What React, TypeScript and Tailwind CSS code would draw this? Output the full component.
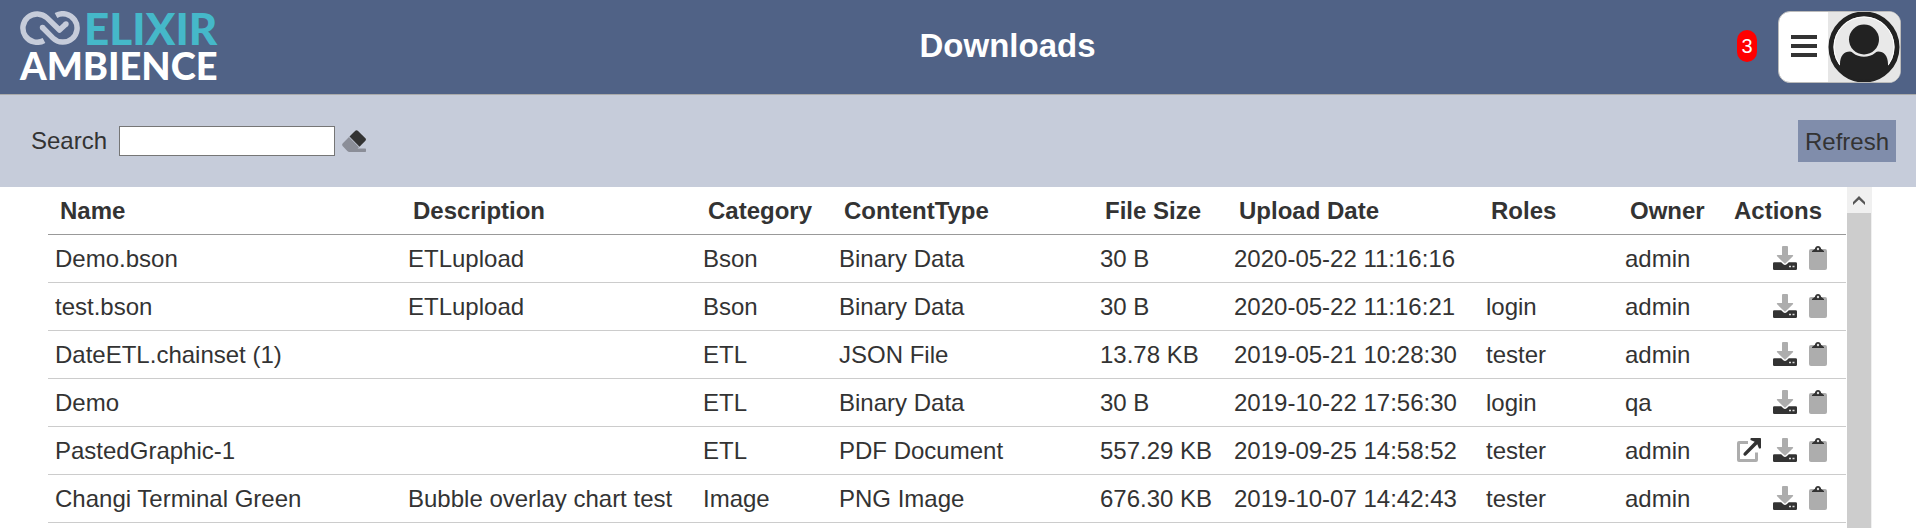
import { useState } from 'react';

type Download = {
  name: string;
  description?: string;
  category: string;
  contentType: string;
  size: string;
  uploaded: string;
  roles?: string;
  owner: string;
  canOpen?: boolean;
};

const downloads: Download[] = [
  { name: 'Demo.bson', description: 'ETLupload', category: 'Bson', contentType: 'Binary Data', size: '30 B', uploaded: '2020-05-22 11:16:16', owner: 'admin' },
  { name: 'test.bson', description: 'ETLupload', category: 'Bson', contentType: 'Binary Data', size: '30 B', uploaded: '2020-05-22 11:16:21', roles: 'login', owner: 'admin' },
  { name: 'DateETL.chainset (1)', category: 'ETL', contentType: 'JSON File', size: '13.78 KB', uploaded: '2019-05-21 10:28:30', roles: 'tester', owner: 'admin' },
  { name: 'Demo', category: 'ETL', contentType: 'Binary Data', size: '30 B', uploaded: '2019-10-22 17:56:30', roles: 'login', owner: 'qa' },
  { name: 'PastedGraphic-1', category: 'ETL', contentType: 'PDF Document', size: '557.29 KB', uploaded: '2019-09-25 14:58:52', roles: 'tester', owner: 'admin', canOpen: true },
  { name: 'Changi Terminal Green', description: 'Bubble overlay chart test', category: 'Image', contentType: 'PNG Image', size: '676.30 KB', uploaded: '2019-10-07 14:42:43', roles: 'tester', owner: 'admin' },
];

const columns = [
  { label: 'Name', width: '' },
  { label: 'Description', width: 'w-[295px]' },
  { label: 'Category', width: 'w-[136px]' },
  { label: 'ContentType', width: 'w-[261px]' },
  { label: 'File Size', width: 'w-[134px]' },
  { label: 'Upload Date', width: 'w-[252px]' },
  { label: 'Roles', width: 'w-[139px]' },
  { label: 'Owner', width: 'w-[105px]' },
];

const cell = 'h-12 p-0 pl-[7px] border-b border-[#ccc]';

function Logo() {
  return (
    <a href="#" aria-label="Elixir Ambience" className="flex flex-col pb-0.5 font-[Lato,sans-serif] font-black">
      <span className="flex items-center gap-1 h-[34px]">
        <svg viewBox="0 0 60 34" className="w-[60px] h-[34px]" fill="none" stroke="#c6ccda" strokeWidth="5.500" strokeLinejoin="round">
          <path d="M24 29.5A14.2 14.2 0 1 1 27 6.900L39.500 19L46 13" />
          <path d="M36 4.500A14.2 14.2 0 1 1 33 27.100L22.500 16.500" />
          <circle cx="46" cy="13" r="2.700" fill="#c6ccda" stroke="none" />
          <circle cx="22.500" cy="16.500" r="2.700" fill="#c6ccda" stroke="none" />
        </svg>
        <span className="text-[44px] leading-[34px] text-[#45b8c9]">ELIXIR</span>
      </span>
      <span className="mt-1 text-[38px] leading-8 text-white">AMBIENCE</span>
    </a>
  );
}

function Avatar() {
  return (
    <svg viewBox="0 0 72 70" className="w-[72px] h-[70px] bg-[#e6e6e6]">
      <circle cx="36" cy="35" r="33" fill="#e9e9e9" stroke="#222" strokeWidth="5" />
      <circle cx="36" cy="35" r="30" fill="none" stroke="#fff" strokeWidth="1" />
      <path d="M12 58V52C12 44 16 39.500 22 39.500Q24 39.500 25 41C31 46 41 46 47 41Q48 39.500 50 39.500C56 39.500 60 44 60 52V58C55 65 46 68 36 68S17 65 12 58Z" fill="#222" />
      <circle cx="36" cy="27.500" r="15" fill="#222" />
    </svg>
  );
}

function EraserIcon() {
  return (
    <svg viewBox="0 0 24 22" className="w-6 h-[22px]">
      <path d="M7 7L17 17.3L15.5 18.5H23.3Q24 18.5 24 19.2V21.3Q24 22 23.3 22H7.5Q6.200 22 5.300 21L.6 16Q-.4 14.800 .6 13.500Z" fill="#8b8e98" />
      <path d="M7.500 6.600L13.300 .7Q14.500 -.4 15.800 .7L23.400 8.300Q24.500 9.500 23.400 10.700L17.500 16.800Z" fill="#333" />
    </svg>
  );
}

function OpenIcon() {
  return (
    <svg viewBox="0 0 24 24" className="size-6">
      <path d="M11 3V6H3V21H18V14.500H21V22Q21 24 19 24H2Q0 24 0 22V5Q0 3 2 3Z" fill="#adadad" />
      <path d="M13.500 .8Q13.500 0 14.300 0H23.200Q24 0 24 .8V9.700Q24 10.500 23.200 10.500H22L20.300 6.300L9.200 17.300Q8 18.300 6.900 17.300T6.800 15L17.700 3.800L13.500 2Z" fill="#333" />
    </svg>
  );
}

function DownloadIcon() {
  return (
    <svg viewBox="0 0 24 24" className="size-6">
      <path d="M10 0H14Q15 0 15 1V9H19.500Q20.600 9.400 19.900 10.300L12.700 17.300Q12 17.800 11.300 17.300L4.100 10.300Q3.400 9.400 4.500 9H9V1Q9 0 10 0Z" fill="#adadad" />
      <path d="M1.300 16.300H8.200L10.300 18.300Q12 19.600 13.700 18.300L15.800 16.300H22.700Q24 16.300 24 17.600V22.700Q24 24 22.700 24H1.300Q0 24 0 22.700V17.600Q0 16.300 1.300 16.300Z" fill="#333" />
      <path d="M16 19.800H18V21.300H16ZM19.500 19.800H21.500V21.300H19.500Z" fill="#ddd" />
    </svg>
  );
}

function ClipboardIcon() {
  return (
    <svg viewBox="0 0 18 24" className="w-[18px] h-6">
      <rect x="0" y="3" width="18" height="21" rx="2" fill="#adadad" />
      <path d="M3 6V5L5.800 3Q6.500 0 9 0T12.200 3L15 5V6Z" fill="#333" />
      <circle cx="9" cy="3" r="1.200" fill="#ddd" />
    </svg>
  );
}

export default function App() {
  const [search, setSearch] = useState('');
  const rows = downloads.filter(d => d.name.toLowerCase().includes(search.toLowerCase()));

  return (
    <div className="flex flex-col h-screen overflow-hidden bg-white text-[#333] text-2xl font-['Liberation_Sans',Arial,sans-serif]">
      <header className="flex items-center justify-between shrink-0 h-[95px] pl-5 pr-[15px] border-b border-[#aaa] bg-[#506286]">
        <div className="flex-1 flex">
          <Logo />
        </div>
        <h1 className="pl-[94px] pb-0.5 text-[33px] leading-10 font-bold text-white">Downloads</h1>
        <div className="flex-1 flex items-center justify-end gap-[21px]">
          <span className="w-5 mb-0.5 rounded-[10px] bg-[#f00] text-xl leading-8 text-center text-white">3</span>
          <button type="button" aria-label="User menu" className="flex items-center overflow-hidden h-[72px] rounded-xl border border-[#bbb] bg-white">
            <svg viewBox="0 0 49 70" className="w-[49px] h-[70px]" fill="#333">
              <path d="M12 23H38V27H12ZM12 32H38V36H12ZM12 41H38V45H12Z" />
            </svg>
            <Avatar />
          </button>
        </div>
      </header>

      <div className="flex items-center justify-between shrink-0 h-[92px] pl-[31px] pr-5 bg-[#c6ccda]">
        <div className="flex items-center">
          <label htmlFor="search">Search</label>
          <input
            id="search"
            type="text"
            value={search}
            onChange={e => setSearch(e.target.value)}
            className="w-[216px] h-[30px] ml-3 px-1 border border-[#767676] bg-white text-xl"
          />
          <button type="button" aria-label="Clear search" className="ml-[7px]" onClick={() => setSearch('')}>
            <EraserIcon />
          </button>
        </div>
        <button type="button" className="h-[42px] px-[7px] pt-0.5 bg-[#808dab]">Refresh</button>
      </div>

      <main className="flex flex-1 min-h-0 pl-12 pr-11">
        <div className="flex-1 overflow-hidden pr-px">
          <table className="w-full table-fixed border-separate border-spacing-0 whitespace-nowrap">
            <thead>
              <tr>
                {columns.map(c => (
                  <th key={c.label} className={`${c.width} h-12 p-0 pl-3 border-b border-[#999] text-left font-bold`}>{c.label}</th>
                ))}
                <th className="w-[123px] h-12 p-0 pr-6 border-b border-[#999] text-right font-bold">Actions</th>
              </tr>
            </thead>
            <tbody>
              {rows.map(d => (
                <tr key={d.name}>
                  <td className={cell}>{d.name}</td>
                  <td className={cell}>{d.description}</td>
                  <td className={cell}>{d.category}</td>
                  <td className={cell}>{d.contentType}</td>
                  <td className={cell}>{d.size}</td>
                  <td className={cell}>{d.uploaded}</td>
                  <td className={cell}>{d.roles}</td>
                  <td className={cell}>{d.owner}</td>
                  <td className="h-12 p-0 pb-0.5 pr-[19px] border-b border-[#ccc]">
                    <div className="flex justify-end gap-3">
                      {d.canOpen && <button type="button" aria-label={`Open ${d.name}`}><OpenIcon /></button>}
                      <button type="button" aria-label={`Download ${d.name}`}><DownloadIcon /></button>
                      <button type="button" aria-label={`Copy ${d.name}`}><ClipboardIcon /></button>
                    </div>
                  </td>
                </tr>
              ))}
            </tbody>
          </table>
        </div>
        <div className="flex flex-col w-[25px] bg-[#f0f0f0]">
          <button type="button" aria-label="Scroll up" className="flex items-center justify-center h-[26px] mr-px">
            <svg viewBox="0 0 12 9" className="w-3 h-[9px]" fill="#555">
              <path d="M6 0L12 6V9L6 3.500L0 9V6Z" />
            </svg>
          </button>
          <div className="flex-1 mr-px bg-[#cdcdcd]"></div>
        </div>
      </main>
    </div>
  );
}
